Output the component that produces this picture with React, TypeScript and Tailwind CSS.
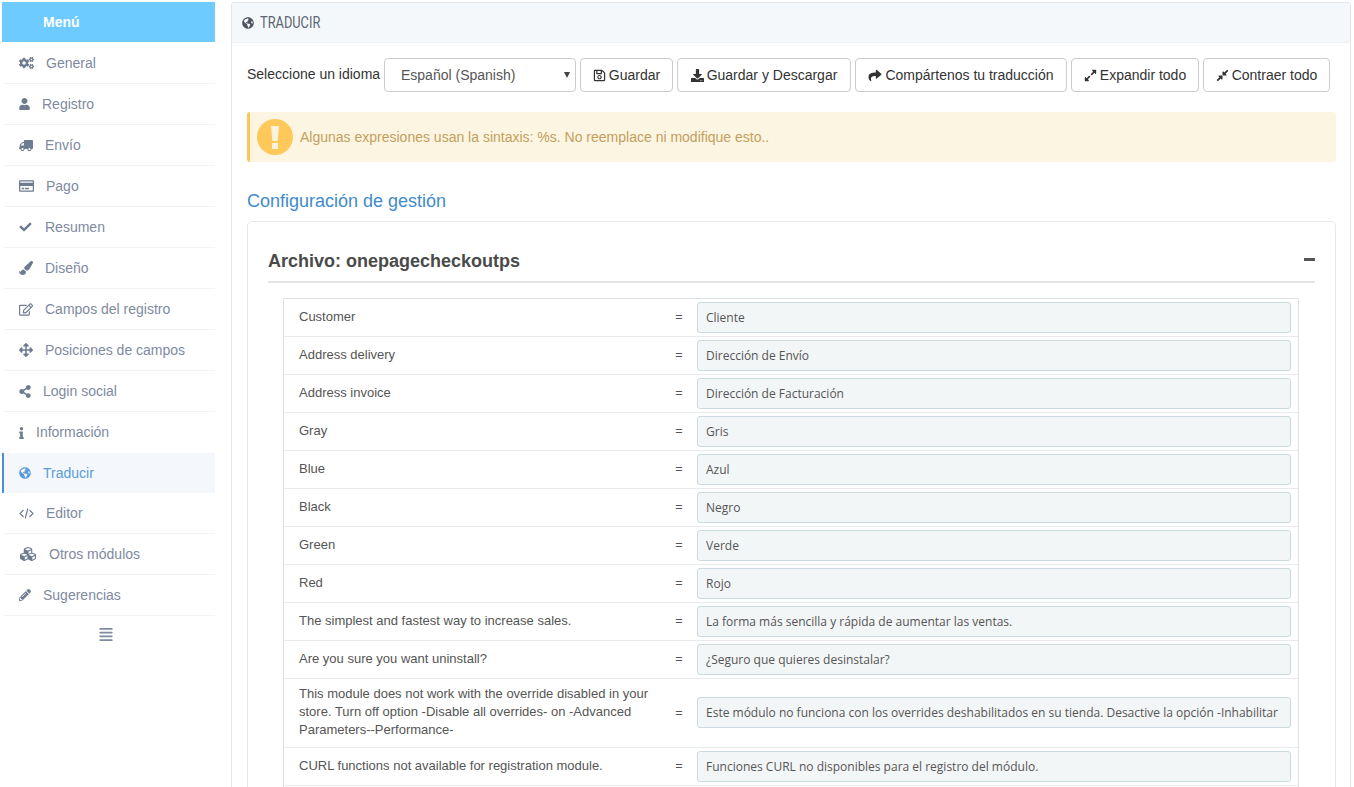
import React from "react";
import {
  FaCogs, FaUser, FaTruck, FaRegCreditCard, FaCheck, FaPaintBrush, FaRegEdit, FaArrowsAlt,
  FaShareAlt, FaInfo, FaGlobeAmericas, FaCubes, FaPencilAlt, FaAlignJustify,
  FaRegSave, FaDownload, FaShare, FaExpandAlt, FaCompressAlt,
} from "react-icons/fa";

function ThinCode({ className }: { className?: string }) {
  return (
    <svg viewBox="0 0 15 13" fill="none" stroke="currentColor" strokeWidth="1.1" className={className}>
      <path d="M4.5 3 1 6.5 4.5 10" />
      <path d="M10.5 3 14 6.5 10.5 10" />
      <path d="M8.8 1.5 6.2 11.5" />
    </svg>
  );
}

const menu = [
  { label: "General", Icon: FaCogs, icon: "w-[15px] h-[14px]", gap: "ml-[12px]" },
  { label: "Registro", Icon: FaUser, icon: "w-[11px] h-[12px]", gap: "ml-[12px]" },
  { label: "Envío", Icon: FaTruck, icon: "w-[14px] h-[13px] -scale-x-100", gap: "ml-[12px]" },
  { label: "Pago", Icon: FaRegCreditCard, icon: "w-[15px] h-[14px]", gap: "ml-[12px]" },
  { label: "Resumen", Icon: FaCheck, icon: "w-[13px] h-[12px]", gap: "ml-[13px]" },
  { label: "Diseño", Icon: FaPaintBrush, icon: "w-[14px] h-[14px]", gap: "ml-[12px]" },
  { label: "Campos del registro", Icon: FaRegEdit, icon: "w-[14px] h-[13px]", gap: "ml-[12px]" },
  { label: "Posiciones de campos", Icon: FaArrowsAlt, icon: "w-[14px] h-[14px]", gap: "ml-[12px]" },
  { label: "Login social", Icon: FaShareAlt, icon: "w-[12px] h-[13px]", gap: "ml-[12px]" },
  { label: "Información", Icon: FaInfo, icon: "w-[5px] h-[12px]", gap: "ml-[12px]", noBorder: true },
  { label: "Traducir", Icon: FaGlobeAmericas, icon: "w-[12px] h-[12px]", gap: "ml-[12px]", active: true },
  { label: "Editor", Icon: ThinCode, icon: "w-[15px] h-[13px]", gap: "ml-[12px]" },
  { label: "Otros módulos", Icon: FaCubes, icon: "w-[18px] h-[16px]", gap: "ml-[12px]" },
  { label: "Sugerencias", Icon: FaPencilAlt, icon: "w-[12px] h-[12px]", gap: "ml-[12px]" },
];

const buttons = [
  { label: "Guardar", Icon: FaRegSave, icon: "w-[13px] h-[13px]", w: "w-[93px]" },
  { label: "Guardar y Descargar", Icon: FaDownload, icon: "w-[13px] h-[13px]", w: "w-[174px]" },
  { label: "Compártenos tu traducción", Icon: FaShare, icon: "w-[14px] h-[13px]", w: "w-[212px]" },
  { label: "Expandir todo", Icon: FaExpandAlt, icon: "w-[13px] h-[13px]", w: "w-[128px]" },
  { label: "Contraer todo", Icon: FaCompressAlt, icon: "w-[13px] h-[13px]", w: "w-[127px]" },
];

const rows: [string, string][] = [
  ["Customer", "Cliente"],
  ["Address delivery", "Dirección de Envío"],
  ["Address invoice", "Dirección de Facturación"],
  ["Gray", "Gris"],
  ["Blue", "Azul"],
  ["Black", "Negro"],
  ["Green", "Verde"],
  ["Red", "Rojo"],
  ["The simplest and fastest way to increase sales.", "La forma más sencilla y rápida de aumentar las ventas."],
  ["Are you sure you want uninstall?", "¿Seguro que quieres desinstalar?"],
  [
    "This module does not work with the override disabled in your store. Turn off option -Disable all overrides- on -Advanced Parameters--Performance-",
    "Este módulo no funciona con los overrides deshabilitados en su tienda. Desactive la opción -Inhabilitar todos los overrides- en -Parámetros avanzados--Rendimiento-",
  ],
  ["CURL functions not available for registration module.", "Funciones CURL no disponibles para el registro del módulo."],
];

export default function App() {
  return (
    <div className="h-[787px] overflow-hidden bg-white flex items-start pt-[2px] pl-[2px] font-['Liberation_Sans',Arial,sans-serif] text-[14px]">
      <aside className="w-[213px] shrink-0">
        <div className="h-[40px] bg-[#6dcbff] text-white font-bold flex items-center pl-[41px]">Menú</div>
        <nav className="flex flex-col pt-[1px]">
          {menu.map((m) => (
            <div
              key={m.label}
              className={
                "flex items-center " +
                (m.active
                  ? "h-[40px] bg-[#f4f7fb] border-l-2 border-[#4a90d2] pl-[15px] text-[#5b9bd8]"
                  : "text-[#7e8a9f] ml-[2px] pl-[15px] h-[41px] " + (m.noBorder ? "" : "border-b border-[#f1f3f6]"))
              }
            >
              <m.Icon className={m.icon + " shrink-0 " + (m.active ? "text-[#5b9bd8]" : "text-[#6f7b8f]")} />
              <span className={m.gap}>{m.label}</span>
            </div>
          ))}
        </nav>
        <div className="flex justify-center pt-[11px] pr-[5px]">
          <FaAlignJustify className="w-[16px] h-[15px] text-[#7e8a9f]" />
        </div>
      </aside>

      <main className="ml-[16px] w-[1120px] shrink-0 border border-[#e4e7ea] rounded-[3px] overflow-hidden bg-white">
        <header className="h-[40px] bg-[#f5f8fb] border-b border-[#eef1f5] flex items-center pl-[10px] text-[#555]">
          <FaGlobeAmericas className="w-[12px] h-[12px] text-[#4f5660]" />
          <span className="ml-[6px] font-['Roboto',sans-serif] text-[16px] text-[#5a6472] origin-left [transform:scaleX(0.8)]">TRADUCIR</span>
        </header>

        <div className="pl-[15px] pr-[14px] pt-[15px]">
          <div className="flex items-center h-[34px]">
            <span className="text-[#333] w-[137px] shrink-0 -mt-[2px]">Seleccione un idioma</span>
            <div className="relative w-[192px] h-[34px] border border-[#ccc] rounded-[4px] flex items-center pl-[16px] text-[#555]">
              Español (Spanish)
              <span className="absolute right-[5px] top-[13px] w-0 h-0 border-l-[3.5px] border-r-[3.5px] border-t-[6px] border-l-transparent border-r-transparent border-t-[#444]" />
            </div>
            <div className="flex gap-[4px] ml-[4px]">
              {buttons.map((b) => (
                <button key={b.label} className={b.w + " h-[34px] border border-[#ccc] rounded-[4px] bg-white text-[#333] flex items-center justify-center gap-[3px]"}>
                  <b.Icon className={b.icon} />
                  {b.label}
                </button>
              ))}
            </div>
          </div>

          <div className="mt-[20px] h-[50px] bg-[#fcf5e1] border-l-[3px] border-[#fbc75a] rounded-[3px] flex items-center pl-[7px] text-[#c2a05f]">
            <div className="w-[36px] h-[36px] rounded-full bg-[#fec95a] flex items-center justify-center">
              <svg viewBox="0 0 8 23" className="w-[8px] h-[23px] text-[#fdf3dc]" fill="currentColor">
                <path d="M0 0h8L6.6 15H1.4z" />
                <rect x="1" y="17" width="6" height="6" />
              </svg>
            </div>
            <span className="ml-[7px]">Algunas expresiones usan la sintaxis: %s. No reemplace ni modifique esto..</span>
          </div>

          <h2 className="mt-[28px] text-[18px] leading-[22px] text-[#428bca]">Configuración de gestión</h2>

          <section className="mt-[9px] border border-[#e8e8e8] rounded-[5px] px-[20px] pt-[27px] pb-[20px]">
            <div className="flex items-center justify-between h-[24px]">
              <h3 className="text-[18px] font-bold text-[#4a4a4a]">Archivo: onepagecheckoutps</h3>
              <span className="w-[11px] h-[3px] bg-[#555] -mt-[4px]" />
            </div>
            <div className="mt-[8px] h-[2px] bg-[#e4e4e4]" />
            <div className="mt-[15px] ml-[15px] mr-[16px] border border-[#dfe2e4] border-b-0">
              {rows.map(([label, value], i) => {
                const long = label.length > 100;
                return (
                  <div key={i} className={"flex items-center border-b border-[#e8eaec] pl-[15px] pr-[7px] " + (long ? "min-h-[69px]" : "h-[38px]")}>
                    <div className="w-[362px] shrink-0 text-[#555] text-[13px] leading-[18px] -mt-[2px]">{label}</div>
                    <div className="w-[36px] shrink-0 text-center text-[#555] text-[12.6px]">=</div>
                    <input
                      readOnly
                      value={value}
                      className={"w-[594px] h-[31px] pl-[8px] pr-[11px] bg-[#f3f6f7] border border-[#cbdadf] rounded-[3px] text-[#555] text-[12px] font-['Open_Sans',sans-serif] outline-none " + (long ? "-mt-[1px]" : "")}
                    />
                  </div>
                );
              })}
              <div className="h-[38px]" />
            </div>
          </section>
        </div>
      </main>
    </div>
  );
}
